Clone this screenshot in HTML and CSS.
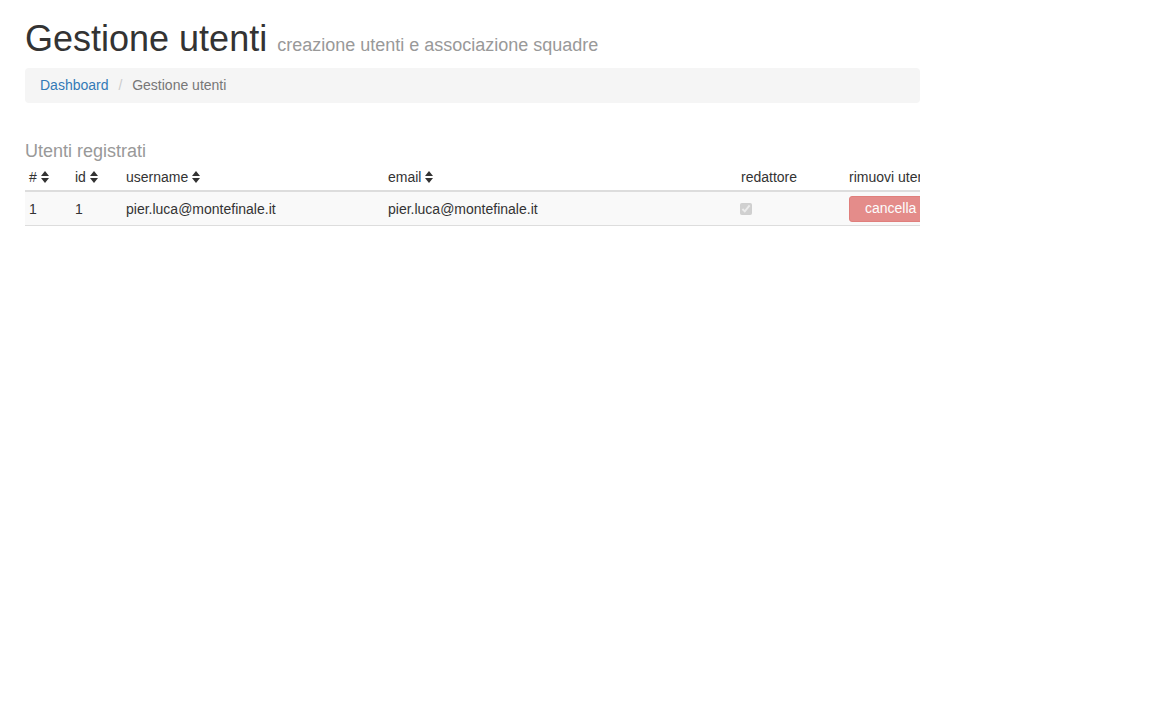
FILE: index.html
```html
<!DOCTYPE html>
<html lang="it">
<head>
  <meta charset="UTF-8">
  <title>Gestione utenti</title>
  <link rel="stylesheet" href="styles.css">
</head>
<body>
  <div class="container">
    <h1 class="page-title">Gestione utenti <small>creazione utenti e associazione squadre</small></h1>
    <div class="breadcrumb">
      <a href="#">Dashboard</a>
      <span class="sep">/</span>
      <span class="active">Gestione utenti</span>
    </div>

    <h4 class="section-title">Utenti registrati</h4>
    <table class="users">
      <colgroup>
        <col style="width:46px">
        <col style="width:51px">
        <col style="width:262px">
        <col style="width:353px">
        <col style="width:108px">
        <col style="width:120px">
      </colgroup>
      <thead>
        <tr>
          <th># <svg class="sort" viewBox="0 0 8 12"><path d="M4 0L8 5H0z M0 7H8L4 12z"/></svg></th>
          <th>id <svg class="sort" viewBox="0 0 8 12"><path d="M4 0L8 5H0z M0 7H8L4 12z"/></svg></th>
          <th>username <svg class="sort" viewBox="0 0 8 12"><path d="M4 0L8 5H0z M0 7H8L4 12z"/></svg></th>
          <th>email <svg class="sort" viewBox="0 0 8 12"><path d="M4 0L8 5H0z M0 7H8L4 12z"/></svg></th>
          <th>redattore</th>
          <th>rimuovi utente</th>
        </tr>
      </thead>
      <tbody>
        <tr>
          <td>1</td>
          <td>1</td>
          <td>pier.luca@montefinale.it</td>
          <td>pier.luca@montefinale.it</td>
          <td><input type="checkbox" checked disabled></td>
          <td><button class="btn-danger" disabled>cancella</button></td>
        </tr>
      </tbody>
    </table>
  </div>
</body>
</html>
```

FILE: styles.css
```css
body {
  margin: 0;
  font-family: "Liberation Sans", Arial, sans-serif;
  font-size: 14px;
  color: #333;
  background: #fff;
}
.container {
  width: 895px;
  margin-left: 25px;
  overflow: hidden;
}
.page-title {
  margin: 18px 0 0;
  font-size: 36px;
  font-weight: normal;
  line-height: 42px;
  color: #333;
}
.page-title small {
  font-size: 18px;
  color: #999;
}
.breadcrumb {
  margin-top: 2px;
  height: 35px;
  line-height: 35px;
  padding: 0 15px;
  background: #f5f5f5;
  border-radius: 4px;
  color: #777;
}
.breadcrumb a {
  color: #337ab7;
  text-decoration: none;
}
.breadcrumb .sep {
  color: #ccc;
  padding: 0 6px;
}
.section-title {
  margin: 37px 0 0;
  font-size: 18px;
  font-weight: normal;
  line-height: 22px;
  color: #999;
}
.users {
  width: 940px;
  table-layout: fixed;
  border-collapse: collapse;
  margin-top: 3px;
}
.users th {
  text-align: left;
  font-weight: normal;
  padding: 3px 4px 4px;
  height: 18px;
  border-bottom: 2px solid #ddd;
  white-space: nowrap;
}
.users td {
  padding: 0 4px;
  height: 33px;
  background: #f9f9f9;
  border-bottom: 1px solid #ddd;
}
.sort {
  width: 8px;
  height: 12px;
  vertical-align: -1px;
  fill: #333;
}
.users input {
  margin: 0 0 0 -1px;
  width: 12px;
  height: 12px;
  vertical-align: -1px;
}
.btn-danger {
  font-family: inherit;
  font-size: 14px;
  color: #fff;
  background: #d9534f;
  opacity: 0.65;
  border: 1px solid #d43f3a;
  border-radius: 3px;
  padding: 3px 15px 4px;
  line-height: 17px;
}
```
